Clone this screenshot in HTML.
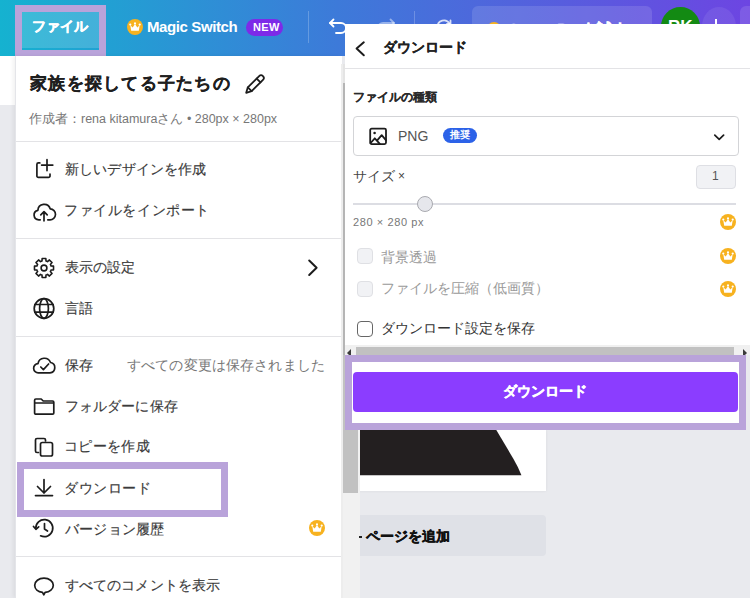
<!DOCTYPE html>
<html><head><meta charset="utf-8">
<style>
*{box-sizing:border-box;margin:0;padding:0}
html,body{width:750px;height:598px;overflow:hidden}
body{position:relative;background:#e9eaee;font-family:"Liberation Sans",sans-serif;color:#333}
.a{position:absolute}
.hl{position:absolute;border:7px solid #b9a3da}
.t{position:absolute;white-space:nowrap;line-height:1}
.b{font-weight:bold;-webkit-text-stroke:0.4px currentColor}
.div{position:absolute;height:1px;background:#e3e3e6}
svg.i{position:absolute;overflow:visible;fill:none;stroke:#1c1c1c;stroke-width:1.7;stroke-linecap:round;stroke-linejoin:round}
.m{font-size:14px;color:#3b3b3b;-webkit-text-stroke:0.15px #3b3b3b}
.cr{position:absolute;width:16px;height:16px;border-radius:50%;background:#f7b21f}
</style></head><body>
<!-- top bar -->
<div class="a" style="left:0;top:0;width:750px;height:56px;background:linear-gradient(90deg,#15b2d0 0%,#3d7ad9 45%,#6d45e2 100%)"></div>
<div class="a" style="left:22px;top:12px;width:77px;height:36px;background:rgba(255,255,255,0.16)"></div>
<div class="t b" style="left:32px;top:19px;font-size:14px;color:#fff;letter-spacing:-0.1px">ファイル</div>
<div class="hl" style="left:15px;top:5px;width:91px;height:52px"></div>
<!-- magic switch -->
<div class="cr" style="left:127px;top:19px"></div>
<svg style="position:absolute;left:127px;top:19px" width="16" height="16" viewBox="0 0 16 16"><path fill="#fff" d="M3.3 6.2L5.7 8.6 8 4.9l2.3 3.7 2.4-2.4-.9 5.6H4.2z"/><circle fill="#fff" cx="3.3" cy="5.6" r="1.1"/><circle fill="#fff" cx="8" cy="4.4" r="1.1"/><circle fill="#fff" cx="12.7" cy="5.6" r="1.1"/></svg>
<div class="t" style="left:147px;top:19px;font-size:15px;font-weight:bold;color:#fff;letter-spacing:-0.4px">Magic Switch</div>
<div class="a" style="left:246px;top:19px;width:37px;height:17px;border-radius:9px;background:#7d2ae8"></div>
<div class="t" style="left:253px;top:22px;font-size:11px;font-weight:bold;color:#fff;letter-spacing:0.3px">NEW</div>
<div class="a" style="left:308px;top:11px;width:1px;height:32px;background:rgba(255,255,255,0.22)"></div>
<div class="a" style="left:414px;top:11px;width:1px;height:32px;background:rgba(255,255,255,0.22)"></div>
<svg class="i" style="left:326px;top:16px;stroke:#fff;stroke-width:1.8" width="24" height="24" viewBox="0 0 24 24"><path d="M4 7h11a5 5 0 0 1 0 10H10"/><path d="M7.5 3.5L4 7l3.5 3.5"/></svg>
<svg class="i" style="left:374px;top:16px;stroke:rgba(255,255,255,0.45);stroke-width:1.8" width="24" height="24" viewBox="0 0 24 24"><path d="M20 7H9a5 5 0 0 0 0 10h5"/><path d="M16.5 3.5L20 7l-3.5 3.5"/></svg>
<svg class="i" style="left:432px;top:13px;stroke:rgba(255,255,255,0.8);stroke-width:1.8" width="24" height="24" viewBox="0 0 24 24"><path d="M5.5 14a6.5 6.5 0 0 1 12-3.5"/><path d="M18.5 7.5v3.5h-3.5"/></svg>
<div class="a" style="left:472px;top:6px;width:180px;height:44px;border-radius:6px;background:rgba(255,255,255,0.12)"></div>
<div class="a" style="left:487px;top:22px;width:14px;height:14px;border-radius:50%;background:#f7b21f"></div>
<div class="t b" style="left:508px;top:21px;font-size:15px;color:#fff">Canva Proを試す</div>
<div class="a" style="left:661px;top:7px;width:39px;height:39px;border-radius:50%;background:#138a13"></div>
<div class="t" style="left:668px;top:18px;font-size:17px;font-weight:bold;color:#fff">RK</div>
<div class="a" style="left:702px;top:7px;width:34px;height:39px;border-radius:50%;background:rgba(255,255,255,0.08)"></div>
<div class="a" style="left:715px;top:19px;width:2px;height:12px;background:#fff"></div>
<div class="a" style="left:740px;top:6px;width:20px;height:44px;border-radius:6px;background:rgba(255,255,255,0.12)"></div>

<!-- left white strip -->
<div class="a" style="left:0;top:56px;width:15px;height:49px;background:#fff"></div>

<!-- left menu -->
<div class="a" style="left:15px;top:56px;width:327px;height:542px;background:#fff;border-left:1px solid #e4e5e9;box-shadow:-2px 0 4px rgba(0,0,0,0.06)"></div>
<div class="t b" style="left:30px;top:75px;font-size:16.5px;color:#1f1f1f;letter-spacing:1.25px;-webkit-text-stroke:0.3px #1f1f1f">家族を探してる子たちの</div>
<svg class="i" style="left:243px;top:72px;stroke-width:1.8" width="24" height="24" viewBox="0 0 24 24"><path d="M3.2 20.8L4.83 15.35 16.14 4.04A2.7 2.7 0 0 1 19.96 7.86L8.65 19.17z"/><path d="M4.83 15.35L8.65 19.17M13.66 6.52L17.48 10.34"/></svg>
<div class="t" style="left:29px;top:113px;font-size:12.5px;color:#777">作成者：rena kitamuraさん • 280px × 280px</div>
<div class="div" style="left:16px;top:141px;width:326px"></div>

<svg class="i" style="left:32px;top:157px" width="24" height="24" viewBox="0 0 24 24"><path d="M7.8 5.9H6.4a1.5 1.5 0 0 0-1.5 1.5v11.5a1.5 1.5 0 0 0 1.5 1.5h10.1a1.5 1.5 0 0 0 1.5-1.5V17"/><path d="M15 2.7v10.9M9.6 8.1h11.2"/></svg>
<div class="t m" style="left:65px;top:162px;letter-spacing:0.15px">新しいデザインを作成</div>
<svg class="i" style="left:32px;top:199px" width="24" height="24" viewBox="0 0 24 24"><path d="M8.2 20.8H6.8a4.8 4.8 0 0 1-.9-9.5A6.3 6.3 0 0 1 18.2 9.8a4.6 4.6 0 0 1-.4 11H15.8"/><path d="M12 21.8V12.8M8.8 15.8L12 12.6l3.2 3.2"/></svg>
<div class="t m" style="left:64px;top:203px;letter-spacing:0.6px">ファイルをインポート</div>
<div class="div" style="left:16px;top:238px;width:326px"></div>

<svg class="i" style="left:32px;top:256px;stroke-width:1.6" width="24" height="24" viewBox="0 0 24 24"><circle cx="12" cy="12" r="2.9"/><path d="M9.27 5.23L9.99 4.98L10.15 2.48L13.85 2.48L14.01 4.98L14.85 5.28L15.54 5.62L17.42 3.96L20.04 6.58L18.38 8.46L18.77 9.27L19.02 9.99L21.52 10.15L21.52 13.85L19.02 14.01L18.72 14.85L18.38 15.54L20.04 17.42L17.42 20.04L15.54 18.38L14.73 18.77L14.01 19.02L13.85 21.52L10.15 21.52L9.99 19.02L9.15 18.72L8.46 18.38L6.58 20.04L3.96 17.42L5.62 15.54L5.23 14.73L4.98 14.01L2.48 13.85L2.48 10.15L4.98 9.99L5.28 9.15L5.62 8.46L3.96 6.58L6.58 3.96L8.46 5.62Z"/></svg>
<div class="t m" style="left:65px;top:260px">表示の設定</div>
<svg class="i" style="left:300px;top:256px;stroke-width:2" width="24" height="24" viewBox="0 0 24 24"><path d="M9.2 4.5L16.6 11.7 9.2 19"/></svg>
<svg class="i" style="left:32px;top:296px" width="24" height="24" viewBox="0 0 24 24"><circle cx="12" cy="12.5" r="9.8"/><ellipse cx="12" cy="12.5" rx="4.4" ry="9.8"/><path d="M2.8 8.5h18.4M2.8 16.2h18.4"/></svg>
<div class="t m" style="left:65px;top:301px">言語</div>
<div class="div" style="left:16px;top:336px;width:326px"></div>

<svg class="i" style="left:32px;top:353px" width="24" height="24" viewBox="0 0 24 24"><path d="M7 19.8H6.5a4.6 4.6 0 0 1-.5-9.2A6.5 6.5 0 0 1 18.5 9.5a5.2 5.2 0 0 1-.5 10.3z"/><path d="M8.8 14l2.6 2.6 5.2-5.6"/></svg>
<div class="t m" style="left:65px;top:358px">保存</div>
<div class="t" style="left:127px;top:358px;font-size:14px;color:#777;letter-spacing:0.15px">すべての変更は保存されました</div>
<svg class="i" style="left:32px;top:394px" width="24" height="24" viewBox="0 0 24 24"><path d="M2.6 6.2a1.2 1.2 0 0 1 1.2-1.2h5.4l2 2h9.4a1.2 1.2 0 0 1 1.2 1.2v10.8a1.2 1.2 0 0 1-1.2 1.2H3.8a1.2 1.2 0 0 1-1.2-1.2zM2.6 9h19.2"/></svg>
<div class="t m" style="left:65px;top:399px;letter-spacing:0.1px">フォルダーに保存</div>
<svg class="i" style="left:32px;top:435px" width="24" height="24" viewBox="0 0 24 24"><path d="M6.5 17.5H5a1.5 1.5 0 0 1-1.5-1.5V5A1.5 1.5 0 0 1 5 3.5h7A1.5 1.5 0 0 1 13.5 5v1"/><rect x="8.5" y="7.5" width="12" height="13.5" rx="1.8"/></svg>
<div class="t m" style="left:64px;top:439px;letter-spacing:0.35px">コピーを作成</div>
<svg class="i" style="left:32px;top:476px" width="24" height="24" viewBox="0 0 24 24"><path d="M12 3.5v13.5M5.5 10.5l6.5 6.5 6.5-6.5M3.5 19.6h17"/></svg>
<div class="t m" style="left:64px;top:481px;letter-spacing:0.6px">ダウンロード</div>
<svg class="i" style="left:32px;top:516px" width="24" height="24" viewBox="0 0 24 24"><path d="M3.8 12.5A8.5 8.5 0 1 1 8.6 19.8"/><path d="M1.5 10.5l2.4 2.8 2.8-2.4"/><path d="M12.5 7.5v5.5l3 2"/></svg>
<div class="t m" style="left:65px;top:522px;letter-spacing:0.2px">バージョン履歴</div>
<div class="cr" style="left:309px;top:520px"></div>
<svg style="position:absolute;left:309px;top:520px" width="16" height="16" viewBox="0 0 16 16"><path fill="#fff" d="M3.3 6.2L5.7 8.6 8 4.9l2.3 3.7 2.4-2.4-.9 5.6H4.2z"/><circle fill="#fff" cx="3.3" cy="5.6" r="1.1"/><circle fill="#fff" cx="8" cy="4.4" r="1.1"/><circle fill="#fff" cx="12.7" cy="5.6" r="1.1"/></svg>
<div class="div" style="left:16px;top:556px;width:326px"></div>
<svg class="i" style="left:32px;top:574px" width="24" height="24" viewBox="0 0 24 24"><path d="M12 4.2c5.2 0 9.3 3.1 9.3 7.1 0 3.8-3.6 6.7-8.2 7L11.8 20.8l-1.3-2.5C6 17.8 2.7 15 2.7 11.3 2.7 7.3 6.8 4.2 12 4.2z"/></svg>
<div class="t m" style="left:65px;top:578px;letter-spacing:0.1px">すべてのコメントを表示</div>
<div class="hl" style="left:17px;top:462px;width:211px;height:55px"></div>

<!-- right panel -->
<div class="a" style="left:345px;top:24px;width:405px;height:331px;background:#fff"></div>
<div class="a" style="left:341px;top:64px;width:2px;height:534px;background:#ededed"></div>
<div class="a" style="left:343px;top:64px;width:2px;height:19px;background:#e4e4e4"></div>
<div class="a" style="left:343px;top:83px;width:2px;height:272px;background:#b5b5b5"></div>
<svg class="i" style="left:348px;top:36px;stroke-width:2" width="24" height="24" viewBox="0 0 24 24"><path d="M15.8 6.3L8.6 12.6l7.2 6.6"/></svg>
<div class="t b" style="left:383px;top:40px;font-size:14px;color:#222;-webkit-text-stroke:0.2px #222">ダウンロード</div>
<div class="div" style="left:345px;top:68px;width:405px"></div>
<div class="t" style="left:353px;top:91px;font-size:12px;font-weight:bold;color:#2a2a2a;-webkit-text-stroke:0.15px #2a2a2a">ファイルの種類</div>
<div class="a" style="left:353px;top:116px;width:386px;height:40px;border:1.2px solid #d3d4d7;border-radius:4px"></div>
<svg class="i" style="left:366px;top:124px;stroke-width:1.8" width="24" height="24" viewBox="0 0 24 24"><rect x="4.2" y="4.6" width="15.8" height="15.5" rx="1.5"/><circle cx="8.6" cy="9" r="1.3" fill="#1c1c1c" stroke="none"/><path d="M4.6 19L8.8 14.3l5 5.6M11.2 16.4l4.5-5.2 4.2 4.9"/></svg>
<div class="t" style="left:398px;top:129px;font-size:14px;color:#555">PNG</div>
<div class="a" style="left:443px;top:128px;width:34px;height:15px;border-radius:8px;background:#2c62e8"></div>
<div class="t" style="left:450px;top:130px;font-size:10px;font-weight:bold;color:#fff">推奨</div>
<svg class="i" style="left:706.5px;top:125px;stroke-width:1.75" width="24" height="24" viewBox="0 0 24 24"><path d="M7.8 10.2l4.4 4.1 4.4-4.1"/></svg>
<div class="t" style="left:353px;top:169px;font-size:14px;color:#444">サイズ</div>
<div class="t" style="left:398px;top:170px;font-size:12px;color:#444">×</div>
<div class="a" style="left:696px;top:165px;width:40px;height:24px;border:1px solid #dedfe4;border-radius:4px;background:#f1f2f5"></div>
<div class="t" style="left:712px;top:170px;font-size:12px;color:#555">1</div>
<div class="a" style="left:353px;top:203px;width:383px;height:2px;background:#dcdde3"></div>
<div class="a" style="left:417px;top:196px;width:16px;height:16px;border-radius:50%;background:#e6e7ec;border:1px solid #a9aab0"></div>
<div class="t" style="left:353px;top:217px;font-size:11px;color:#777;letter-spacing:0.6px">280 × 280 px</div>
<div class="a" style="left:357px;top:248px;width:16px;height:16px;border-radius:4px;background:#f1f2f5;border:1px solid #dfe0e4"></div>
<div class="t" style="left:381px;top:250px;font-size:14px;color:#9a9a9a">背景透過</div>
<div class="a" style="left:357px;top:281px;width:16px;height:16px;border-radius:4px;background:#f1f2f5;border:1px solid #dfe0e4"></div>
<div class="t" style="left:381px;top:281px;font-size:14px;color:#9a9a9a">ファイルを圧縮（低画質）</div>
<div class="a" style="left:357px;top:321px;width:16px;height:16px;border-radius:4px;background:#fff;border:1.5px solid #666"></div>
<div class="t" style="left:381px;top:321px;font-size:14px;color:#333">ダウンロード設定を保存</div>
<div class="cr" style="left:720px;top:214px"></div>
<svg style="position:absolute;left:720px;top:214px" width="16" height="16" viewBox="0 0 16 16"><path fill="#fff" d="M3.3 6.2L5.7 8.6 8 4.9l2.3 3.7 2.4-2.4-.9 5.6H4.2z"/><circle fill="#fff" cx="3.3" cy="5.6" r="1.1"/><circle fill="#fff" cx="8" cy="4.4" r="1.1"/><circle fill="#fff" cx="12.7" cy="5.6" r="1.1"/></svg>
<div class="cr" style="left:720px;top:248px"></div>
<svg style="position:absolute;left:720px;top:248px" width="16" height="16" viewBox="0 0 16 16"><path fill="#fff" d="M3.3 6.2L5.7 8.6 8 4.9l2.3 3.7 2.4-2.4-.9 5.6H4.2z"/><circle fill="#fff" cx="3.3" cy="5.6" r="1.1"/><circle fill="#fff" cx="8" cy="4.4" r="1.1"/><circle fill="#fff" cx="12.7" cy="5.6" r="1.1"/></svg>
<div class="cr" style="left:720px;top:281px"></div>
<svg style="position:absolute;left:720px;top:281px" width="16" height="16" viewBox="0 0 16 16"><path fill="#fff" d="M3.3 6.2L5.7 8.6 8 4.9l2.3 3.7 2.4-2.4-.9 5.6H4.2z"/><circle fill="#fff" cx="3.3" cy="5.6" r="1.1"/><circle fill="#fff" cx="8" cy="4.4" r="1.1"/><circle fill="#fff" cx="12.7" cy="5.6" r="1.1"/></svg>

<!-- canvas -->
<div class="a" style="left:345px;top:430px;width:201px;height:61px;background:#fff;box-shadow:0 0 3px rgba(0,0,0,0.07)"></div>
<svg style="position:absolute;left:345px;top:430px" width="180" height="46"><path fill="#231f20" d="M0 0H151.3L168.5 29Q173.5 37.5 176.4 45.2H0z"/></svg>
<div class="a" style="left:345px;top:515px;width:201px;height:41px;border-radius:4px;background:#dfe1e7"></div>
<div class="t b" style="left:366px;top:529px;font-size:14px;color:#111">ページを追加</div>
<!-- v scrollbar -->
<div class="a" style="left:343px;top:355px;width:17px;height:243px;background:#f1f1f1"></div>
<div class="a" style="left:343px;top:355px;width:15px;height:138px;background:#c1c1c1"></div>
<div class="a" style="left:359px;top:536px;width:3px;height:1.5px;background:#222"></div>

<!-- h scrollbar -->
<div class="a" style="left:345px;top:345px;width:405px;height:10px;background:#f0f0f0"></div>
<div class="a" style="left:356px;top:347px;width:378px;height:8px;background:#c1c1c1"></div>
<svg style="position:absolute;left:742px;top:349px" width="6" height="8"><path d="M1 0L5 4 1 8z" fill="#3a3a3a"/></svg>
<svg style="position:absolute;left:346px;top:349px" width="6" height="8"><path d="M5 0L1 4 5 8z" fill="#3a3a3a"/></svg>

<!-- download highlight -->
<div class="a" style="left:345px;top:355px;width:401px;height:75px;background:#fff"></div>
<div class="a" style="left:353px;top:372px;width:385px;height:40px;border-radius:4px;background:#8b3dff"></div>
<div class="t b" style="left:503px;top:384px;font-size:14px;color:#fff">ダウンロード</div>
<div class="hl" style="left:345px;top:355px;width:401px;height:75px"></div>
</body></html>
